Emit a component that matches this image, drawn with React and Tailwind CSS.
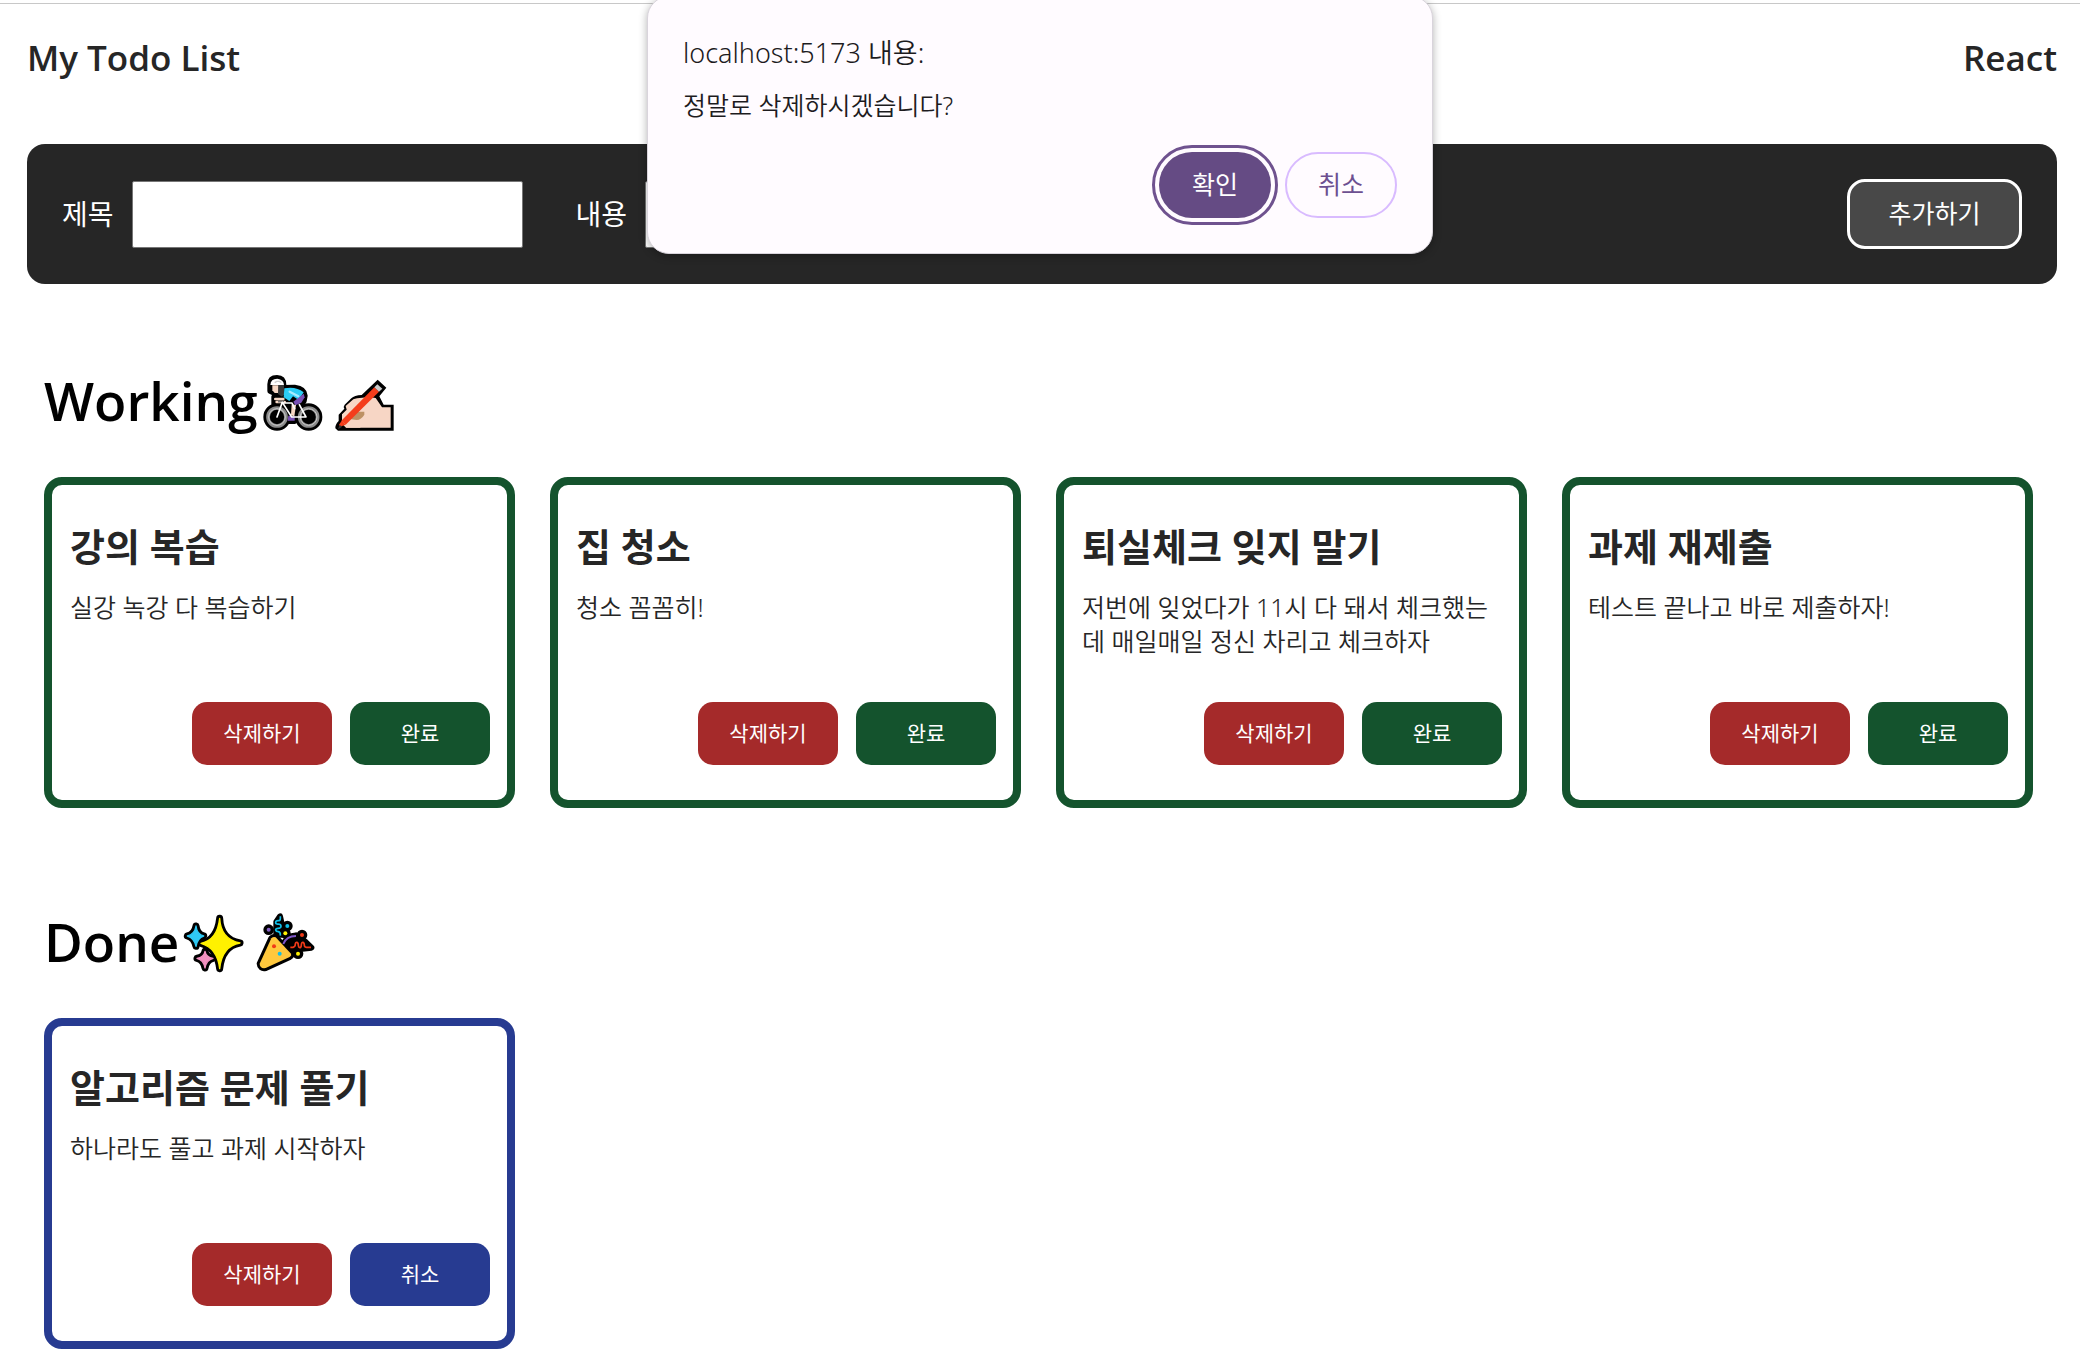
import { useState } from 'react';

const initialTodos = [
  { id: 1, title: '강의 복습', body: '실강 녹강 다 복습하기', isDone: false },
  { id: 2, title: '집 청소', body: '청소 꼼꼼히!', isDone: false },
  {
    id: 3,
    title: '퇴실체크 잊지 말기',
    body: '저번에 잊었다가 11시 다 돼서 체크했는데 매일매일 정신 차리고 체크하자',
    isDone: false,
  },
  { id: 4, title: '과제 재제출', body: '테스트 끝나고 바로 제출하자!', isDone: false },
  { id: 5, title: '알고리즘 문제 풀기', body: '하나라도 풀고 과제 시작하자', isDone: true },
];

function CyclistIcon() {
  return (
    <svg viewBox="25 10 180 180" className="w-[60px] h-[60px] overflow-visible" aria-hidden="true">
      <g stroke="#000" strokeWidth="16" strokeLinejoin="round" fill="#000">
        <circle cx="67" cy="142" r="33" />
        <circle cx="162" cy="142" r="33" />
        <path d="M46 44 Q46 24 67 24 Q87 24 87 46 L87 54 L120 53 Q150 57 151 78 L148 94 L134 116 L120 155 L100 155 L96 112 L58 102 L58 82 L62 72 L46 64 Z" />
      </g>
      <g fill="none">
        <circle cx="67" cy="142" r="27" stroke="#8b8b8b" strokeWidth="11" />
        <circle cx="162" cy="142" r="27" stroke="#8b8b8b" strokeWidth="11" />
        <circle cx="67" cy="142" r="25" stroke="#c9c9c9" strokeWidth="3" />
        <circle cx="162" cy="142" r="25" stroke="#c9c9c9" strokeWidth="3" />
      </g>
      <path d="M53 47 H72 V70 H60 L53 62 Z" fill="#f7d7c4" />
      <path d="M71 46 H88 V74 L82 81 L70 73 Z" fill="#383838" />
      <path d="M47 46 Q48 27 68 27 Q87 29 88 46 Z" fill="#fff" />
      <path d="M60 39 L66 35 H74 L80 39" stroke="#ccc" strokeWidth="4" fill="none" />
      <path d="M62 88 H86 M66 97 H90" stroke="#f7d7c4" strokeWidth="8" strokeLinecap="round" />
      <path d="M70 96 H88" stroke="#777" strokeWidth="5" />
      <path d="M89 56 Q124 49 147 68 L132 91 L115 80 L104 94 L87 83 Z" fill="#2ccdf5" />
      <path d="M105 66 L131 80" stroke="#a6ecff" strokeWidth="7" strokeLinecap="round" />
      <path d="M147 72 L150 83 L140 99 L122 107 L116 96 Z" fill="#7951b5" />
      <path d="M111 104 L124 106 L119 140 L109 137 Z" fill="#f7d7c4" />
      <path d="M101 138 L120 140 V153 H99 Z" fill="#7951b5" />
      <g stroke="#fff" strokeWidth="5" fill="none" strokeLinejoin="round" strokeLinecap="round">
        <path d="M67 142 L83 98 L111 142 H154 L134 105" />
        <path d="M82 100 H112 L120 117" />
      </g>
    </svg>
  );
}

function WritingHandIcon() {
  return (
    <svg viewBox="240 10 180 180" className="w-[60px] h-[60px] overflow-visible" aria-hidden="true">
      <path
        d="M244 176 Q243 165 254 154 V135 L271 117 Q267 111 272 105 L292 86 Q301 77 323 76 L371 30 L397 54 L376 80 L389 105 H419 V183 H252 Z"
        fill="#000"
      />
      <path
        d="M264 134 L278 120 L275 109 L298 89 Q307 84 325 84 L344 82 L365 85 L384 113 H410 V174 H276 L264 162 Z"
        fill="#f7d6c5"
      />
      <path d="M306 126 H331 V135 Q322 150 308 151 L286 148 Z" fill="#bd9164" />
      <path d="M283 150 L271 164 L277 174 H320 L306 154 Z" fill="#f7d6c5" />
      <path d="M361 53 L375 66 L275 165 L262 153 Z" fill="#f43d1b" />
      <path d="M361 53 L370 44 L385 57 L375 66 Z" fill="#c9c9c9" />
      <path d="M255 165 L263 153 L275 165 L258 171 Z" fill="#f43d1b" />
      <path d="M252 179 L257 166 L265 171 Z" fill="#333" />
    </svg>
  );
}

const bigStar = 'M132 31 Q135 94 193 105 Q139 114 132 182 Q125 120 76 106 Q125 96 132 31 Z';
const blueStar = 'M61 54 Q64 79 84 84 Q65 90 61 115 Q56 90 35 84 Q57 79 61 54 Z';
const pinkStar = 'M88 130 Q91 148 112 151 Q92 156 88 180 Q84 156 64 151 Q85 148 88 130 Z';

function SparklesIcon() {
  return (
    <svg viewBox="25 18 180 180" className="w-[60px] h-[60px] overflow-visible" aria-hidden="true">
      <g stroke="#000" strokeWidth="21" strokeLinejoin="round" fill="#000">
        <path d={bigStar} />
        <path d={blueStar} />
        <path d={pinkStar} />
      </g>
      <g strokeWidth="4" strokeLinejoin="round">
        <path d={blueStar} fill="#2fc9f5" stroke="#2fc9f5" />
        <path d={pinkStar} fill="#f391c0" stroke="#f391c0" />
        <path d={bigStar} fill="#fff100" stroke="#fff100" />
      </g>
    </svg>
  );
}

function PartyIcon() {
  return (
    <svg viewBox="238 18 180 180" className="w-[60px] h-[60px] overflow-visible" aria-hidden="true">
      <g stroke="#000" strokeWidth="18" strokeLinejoin="round" strokeLinecap="round" fill="#000">
        <path d="M287 91 Q293 85 300 88 L346 137 Q349 143 342 147 L270 180 Q253 183 252 167 Z" />
        <path d="M313 25 L302 42 L302 80 L318 80 L318 48 Z" />
        <path d="M323 106 L340 86 L361 82 L390 102 L407 119 L367 124 L342 126 Z" />
      </g>
      <g fill="#000">
        <circle cx="279" cy="65" r="16" />
        <circle cx="335" cy="54" r="16" />
        <circle cx="329" cy="76" r="16" />
        <circle cx="379" cy="81" r="16" />
        <circle cx="367" cy="137" r="16" />
      </g>
      <path d="M287 91 Q293 85 300 88 L346 137 Q349 143 342 147 L270 180 Q253 183 252 167 Z" fill="#ffc83d" />
      <g fill="none" strokeWidth="5">
        <path
          d="M314 25 V32 Q314 38 307 38 Q300 38 300 44 Q300 49 308 48 Q316 48 316 55 Q316 61 307 61 Q300 61 300 66 Q301 71 308 71 Q315 72 314 83"
          stroke="#10bfe8"
        />
        <path
          d="M344 118 H352 Q359 116 359 108 Q360 102 364 103 Q368 104 368 112 Q369 119 373 119 Q377 118 377 110 Q378 102 382 103 Q386 104 386 112 Q387 118 393 118 H406"
          stroke="#f03a17"
        />
        <path d="M323 108 Q332 84 361 84" stroke="#7e57c7" strokeWidth="6" />
      </g>
      <circle cx="279" cy="65" r="6" fill="#8661c5" />
      <circle cx="335" cy="54" r="6" fill="#10bfe8" />
      <circle cx="329" cy="76" r="6" fill="#fff100" />
      <circle cx="379" cy="81" r="6" fill="#f03a17" />
      <circle cx="367" cy="137" r="6" fill="#fff100" />
      <circle cx="295" cy="115" r="6" fill="#f03a17" />
      <circle cx="312" cy="137" r="6" fill="#10bfe8" />
    </svg>
  );
}

function TodoCard({ todo, onDelete, onToggle }) {
  return (
    <li
      className={`flex flex-col justify-between h-[331px] border-8 rounded-[18px] pl-[18px] pr-[17px] pt-9 pb-[35px] ${
        todo.isDone ? 'border-[#273b91]' : 'border-[#14532d]'
      }`}
    >
      <div>
        <h2 className="text-[38px] leading-[50px] font-bold">{todo.title}</h2>
        <p className="mt-[19px] text-[25px] leading-[34px] font-[350] font-['Noto_Sans','Noto_Sans_CJK_KR',sans-serif]">
          {todo.body}
        </p>
      </div>
      <div className="flex justify-end gap-[18px] text-[21px] text-white">
        <button
          type="button"
          onClick={() => onDelete(todo)}
          className="w-[140px] h-[63px] rounded-[15px] bg-[#a52a2a]"
        >
          삭제하기
        </button>
        <button
          type="button"
          onClick={() => onToggle(todo.id)}
          className={`w-[140px] h-[63px] rounded-[15px] ${todo.isDone ? 'bg-[#273b91]' : 'bg-[#14532d]'}`}
        >
          {todo.isDone ? '취소' : '완료'}
        </button>
      </div>
    </li>
  );
}

function TodoSection({ heading, icons, todos, onDelete, onToggle }) {
  return (
    <section className="pl-[17px] pr-6">
      <h1 className="flex items-center h-[60px] gap-[11px] text-[53px] font-semibold text-black">
        <span className="-mr-1.5 pb-1">{heading}</span>
        {icons}
      </h1>
      <ul className="grid grid-cols-4 gap-[35px] mt-11">
        {todos.map((todo) => (
          <TodoCard key={todo.id} todo={todo} onDelete={onDelete} onToggle={onToggle} />
        ))}
      </ul>
    </section>
  );
}

function ConfirmDialog({ onConfirm, onCancel }) {
  return (
    <div
      role="dialog"
      aria-labelledby="confirm-title"
      className="absolute -top-1 left-1/2 -translate-x-1/2 w-[786px] h-[258px] rounded-[22px] border border-[#d9d4dc] bg-[#fffbff] shadow-[0_2px_8px_rgba(0,0,0,0.3)] px-[35px] pt-9 text-[#1d1b1e] font-['Noto_Sans','Noto_Sans_CJK_KR',sans-serif]"
    >
      <h2 id="confirm-title" className="text-[27px] leading-10 font-[350]">
        localhost:5173 내용:
      </h2>
      <p className="mt-3.5 text-[25px] leading-9 font-[350]">정말로 삭제하시겠습니다?</p>
      <div className="flex justify-end gap-[14px] mt-[29px] text-[25px]">
        <button
          type="button"
          onClick={onConfirm}
          className="w-28 h-[66px] rounded-full bg-[#654b84] text-white outline-3 outline-offset-4 outline-[#6f528f]"
        >
          확인
        </button>
        <button
          type="button"
          onClick={onCancel}
          className="w-28 h-[66px] rounded-full border-2 border-[#d9bbff] text-[#6d5091]"
        >
          취소
        </button>
      </div>
    </div>
  );
}

export default function App() {
  const [todos, setTodos] = useState(initialTodos);
  const [title, setTitle] = useState('');
  const [body, setBody] = useState('');
  const [target, setTarget] = useState(initialTodos[0]);

  const handleSubmit = (e) => {
    e.preventDefault();
    if (!title || !body) return;
    setTodos([...todos, { id: Date.now(), title, body, isDone: false }]);
    setTitle('');
    setBody('');
  };

  const handleConfirm = () => {
    setTodos(todos.filter((todo) => todo.id !== target.id));
    setTarget(null);
  };

  const handleToggle = (id) => {
    setTodos(todos.map((todo) => (todo.id === id ? { ...todo, isDone: !todo.isDone } : todo)));
  };

  return (
    <div className="relative bg-white text-[#262626] pt-[3px] font-['Open_Sans','Noto_Sans_CJK_KR',sans-serif]">
      <div className="border-t border-[#c8c8c8] pl-[27px] pr-[23px] pb-3">
        <header className="flex justify-between items-center h-[110px] pb-0.5 text-[35px] font-semibold">
          <div>My Todo List</div>
          <div>React</div>
        </header>

        <form
          onSubmit={handleSubmit}
          className="flex items-center justify-between h-[140px] mt-[30px] px-[35px] rounded-[18px] bg-[#262626] text-white"
        >
          <div className="flex items-center text-[28px]">
            <label htmlFor="title">제목</label>
            <input
              id="title"
              value={title}
              onChange={(e) => setTitle(e.target.value)}
              className="w-[391px] h-[67px] ml-[18px] mr-[53px] px-3 rounded-xs border border-[#767676] bg-white text-black"
            />
            <label htmlFor="body">내용</label>
            <input
              id="body"
              value={body}
              onChange={(e) => setBody(e.target.value)}
              className="w-[391px] h-[67px] ml-[18px] px-3 rounded-xs border border-[#767676] bg-white text-black"
            />
          </div>
          <button
            type="submit"
            className="w-[175px] h-[70px] rounded-[18px] border-3 border-white bg-[#484848] text-[25px]"
          >
            추가하기
          </button>
        </form>

        <main className="flex flex-col gap-[106px] mt-[89px]">
          <TodoSection
            heading="Working"
            icons={
              <>
                <CyclistIcon />
                <WritingHandIcon />
              </>
            }
            todos={todos.filter((todo) => !todo.isDone)}
            onDelete={setTarget}
            onToggle={handleToggle}
          />
          <TodoSection
            heading="Done"
            icons={
              <>
                <SparklesIcon />
                <PartyIcon />
              </>
            }
            todos={todos.filter((todo) => todo.isDone)}
            onDelete={setTarget}
            onToggle={handleToggle}
          />
        </main>
      </div>

      {target && <ConfirmDialog onConfirm={handleConfirm} onCancel={() => setTarget(null)} />}
    </div>
  );
}
